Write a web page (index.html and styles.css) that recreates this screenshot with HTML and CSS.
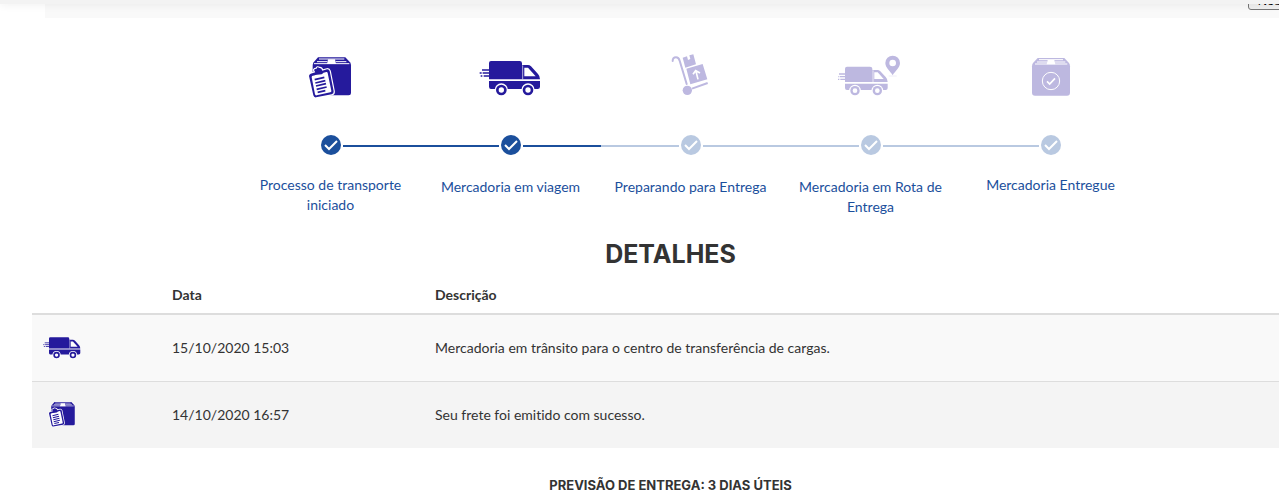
FILE: index.html
```html
<!DOCTYPE html>
<html lang="pt-BR">
<head>
<meta charset="utf-8">
<meta name="viewport" content="width=device-width, initial-scale=1">
<title>Detalhes da entrega</title>
<link rel="stylesheet" href="styles.css">
</head>
<body>
<svg class="sprite" aria-hidden="true">
  <symbol id="package" viewBox="24 27 198 132">
    <path fill="currentColor" d="M84 37H166L180 52Q183 56 183 62V144Q183 151 176 151H76Q68 151 68 143V62Q68 56 71 52Z"/>
    <path fill="none" stroke="#fff" stroke-width="3" d="M87 42H163M81 50H112M137 50H169M72 56H178"/>
    <path fill="#fff" d="M114 43H135L138 57H111Z"/>
    <path fill="currentColor" stroke="#fff" stroke-width="7" paint-order="stroke" stroke-linejoin="round" d="M62 86L76 82Q67 71 80 71Q81 64 88 69Q95 68 97 77L111 73Q117 72 119 78L131 139Q132 146 125 148L78 157Q72 158 70 151L57 93Q57 88 62 86Z"/>
    <path fill="#fff" d="M66 93L75 91L79 88L98 84L109 81Q112 80 113 84L124 137Q125 141 121 142L80 151Q76 152 75 148L65 97Z"/>
    <path fill="currentColor" d="M74 90L77 82Q85 83 84 76Q89 70 91 78Q97 80 100 84L95 88Z"/>
    <path fill="none" stroke="currentColor" stroke-width="5" d="M74 104L103 97M76 114L106 107M78 123L108 116M80 133L110 126M83 142L106 137"/>
  </symbol>
  <symbol id="van" viewBox="24 27 198 132">
    <path fill="currentColor" d="M63 48H149Q156 48 156 55V60H174Q179 60 183 64L204 87Q210 93 210 103H57V54Q57 48 63 48ZM57 108H210V125Q210 132 203 132H63Q57 132 57 125Z"/>
    <path fill="#fff" d="M163 68H174L197 94H163Z"/>
    <path fill="none" stroke="#fff" stroke-width="2" d="M158 61V103"/>
    <g fill="currentColor" stroke="#fff" stroke-width="8" paint-order="stroke"><circle cx="94" cy="135" r="16"/><circle cx="174" cy="135" r="16"/></g>
    <g fill="#fff"><circle cx="94" cy="135" r="8"/><circle cx="174" cy="135" r="8"/></g>
    <path fill="none" stroke="currentColor" stroke-width="4" d="M36 75H57M29 84H35M38 84H57M32 93H37M41 93H57"/>
  </symbol>
  <symbol id="trolley" viewBox="24 27 198 132">
    <path fill="none" stroke="currentColor" stroke-width="6" stroke-linecap="round" d="M68 48Q68 37 78 37Q86 37 89 47L110 117"/>
    <circle cx="112" cy="136" r="14" fill="currentColor"/>
    <path fill="none" stroke="currentColor" stroke-width="6" d="M126 131L173 114"/>
    <path fill="currentColor" d="M98 38L111 34L114 45L121 42L118 31L130 28L138 58L106 68ZM109 71L158 57L172 103L121 118Z"/>
    <path fill="none" stroke="#fff" stroke-width="5" d="M144 103L138 79M129 88L137 77L150 84"/>
  </symbol>
  <symbol id="route" viewBox="39 27 198 132">
    <path fill="currentColor" d="M66 65H135Q142 65 142 71V75H157Q162 75 166 79L182 96Q188 102 188 111H60V71Q60 65 66 65ZM60 116H188V129Q188 135 182 135H66Q60 135 60 129Z"/>
    <path fill="#fff" d="M148 82H158L176 102H148Z"/>
    <path fill="none" stroke="#fff" stroke-width="2" d="M144 76V111"/>
    <g fill="currentColor" stroke="#fff" stroke-width="8" paint-order="stroke"><circle cx="90" cy="137" r="14"/><circle cx="157" cy="137" r="14"/></g>
    <g fill="#fff"><circle cx="90" cy="137" r="7"/><circle cx="157" cy="137" r="7"/></g>
    <path fill="none" stroke="currentColor" stroke-width="4" d="M42 87H60M36 95H41M44 95H60M38 103H43M46 103H60"/>
    <path fill="currentColor" fill-rule="evenodd" d="M203 91C197 79 181 69 181 54A22 22 0 0 1 225 54C225 69 209 79 203 91ZM203 44A10 10 0 1 0 203 64A10 10 0 1 0 203 44Z"/>
    <path stroke="currentColor" stroke-opacity=".4" stroke-width="2" d="M191 93H215"/>
  </symbol>
  <symbol id="delivered" viewBox="24 27 198 132">
    <path fill="currentColor" d="M83 39H163L177 54Q180 58 180 64V143Q180 152 171 152H75Q66 152 66 143V64Q66 58 69 54Z"/>
    <path fill="none" stroke="#fff" stroke-width="3" d="M87 44H159M81 51H112M134 51H166M75 57H172"/>
    <path fill="#fff" d="M113 45H133L136 58H110Z"/>
    <circle cx="123" cy="108" r="26" fill="none" stroke="#fff" stroke-width="3"/>
    <path fill="none" stroke="#fff" stroke-width="5" d="M111 109L119 117L135 100"/>
  </symbol>
  <symbol id="check" viewBox="0 0 20 20">
    <circle cx="10" cy="10" r="10" fill="currentColor"/>
    <path fill="none" stroke="#fff" stroke-width="2" d="M4 10L8 14L16 6"/>
  </symbol>
</svg>

<header class="topbar"></header>
<div class="panel"><button class="panel-button" type="button">Nossos</button></div>

<main class="content">
  <ol class="steps">
    <li class="step done">
      <svg class="step-icon"><use href="#package"/></svg>
      <div class="track"><svg class="check"><use href="#check"/></svg></div>
      <p class="step-label">Processo de transporte iniciado</p>
    </li>
    <li class="step done">
      <svg class="step-icon"><use href="#van"/></svg>
      <div class="track"><svg class="check"><use href="#check"/></svg></div>
      <p class="step-label lower">Mercadoria em viagem</p>
    </li>
    <li class="step">
      <svg class="step-icon"><use href="#trolley"/></svg>
      <div class="track"><svg class="check"><use href="#check"/></svg></div>
      <p class="step-label lower">Preparando para Entrega</p>
    </li>
    <li class="step">
      <svg class="step-icon"><use href="#route"/></svg>
      <div class="track"><svg class="check"><use href="#check"/></svg></div>
      <p class="step-label lower">Mercadoria em Rota de Entrega</p>
    </li>
    <li class="step">
      <svg class="step-icon"><use href="#delivered"/></svg>
      <div class="track"><svg class="check"><use href="#check"/></svg></div>
      <p class="step-label">Mercadoria Entregue</p>
    </li>
  </ol>

  <h2 class="title">DETALHES</h2>

  <table class="events">
    <thead>
      <tr><th class="col-icon"></th><th class="col-date" scope="col">Data</th><th scope="col">Descrição</th></tr>
    </thead>
    <tbody>
      <tr>
        <td><svg class="row-icon"><use href="#van"/></svg></td>
        <td>15/10/2020 15:03</td>
        <td>Mercadoria em trânsito para o centro de transferência de cargas.</td>
      </tr>
      <tr>
        <td><svg class="row-icon"><use href="#package"/></svg></td>
        <td>14/10/2020 16:57</td>
        <td>Seu frete foi emitido com sucesso.</td>
      </tr>
    </tbody>
  </table>

  <p class="forecast">PREVISÃO DE ENTREGA: 3 DIAS ÚTEIS</p>
</main>
</body>
</html>
```
FILE: styles.css
```css
* {
  box-sizing: border-box;
}

body {
  margin: 0;
  overflow: hidden;
  background: #fff;
  color: #333;
  font: 14px/20px Lato, sans-serif;
  font-variant-ligatures: none;
}

.sprite {
  display: none;
}

.topbar {
  position: relative;
  z-index: 1;
  height: 4px;
  background: #f3f3f3;
  box-shadow: 0 0 8px rgba(0, 0, 0, 0.1);
}

.panel {
  display: flex;
  justify-content: flex-end;
  align-items: flex-end;
  height: 14px;
  margin-left: 45px;
  padding-bottom: 8px;
  background: #f9f9f9;
}

.panel-button {
  flex: none;
  height: 18px;
  margin-right: -32px;
  padding: 0 9px;
  border: 1px solid #767676;
  border-radius: 3px;
  background: #efefef;
  color: #000;
  font: 13px/16px "Liberation Sans", sans-serif;
}

.content {
  margin: 36px -30px 0 32px;
}

.steps {
  display: flex;
  justify-content: center;
  margin: 0;
  padding: 0 0 0 40px;
  list-style: none;
}

.step {
  width: 180px;
  color: #bdb8e0;
  text-align: center;
}

.step.done {
  color: #251a9c;
}

.step-icon {
  display: block;
  width: 66px;
  height: 44px;
  margin: 0 auto;
  overflow: visible;
}

.track {
  display: flex;
  align-items: center;
  gap: 2px;
  height: 20px;
  margin: 37px 0 20px;
  color: #b9c9e1;
}

.done .track {
  color: #1b4f9c;
}

.track::before,
.track::after {
  content: "";
  flex: 1;
  height: 2px;
  margin-top: 2px;
  background: currentColor;
}

.step:first-child .track::before,
.step:last-child .track::after {
  background: none;
}

.check {
  width: 20px;
  height: 20px;
}

.step-label {
  margin: 0;
  padding: 0 10px;
  color: #1b4f9c;
}

.step-label.lower {
  padding-top: 2px;
}

.title {
  margin: 24px 0 10px;
  font: 700 25px/26px Inter, sans-serif;
  text-align: center;
}

.events {
  width: 100%;
  border-collapse: separate;
  border-spacing: 0;
  table-layout: fixed;
  text-align: left;
}

.events th {
  padding: 8px;
  border-bottom: 2px solid #ddd;
}

.events td {
  height: 66px;
  padding: 8px;
  background: #f9f9f9;
}

.events tr + tr td {
  height: 67px;
  border-top: 1px solid #ddd;
  background: #f4f4f4;
}

.col-icon {
  width: 132px;
}

.col-date {
  width: 263px;
}

.row-icon {
  display: block;
  width: 41px;
  height: 27px;
  margin: 0 0 4px 2px;
  color: #251a9c;
}

.forecast {
  margin: 28px 0 0;
  font: 700 13px/18px Inter, sans-serif;
  text-align: center;
}
```
